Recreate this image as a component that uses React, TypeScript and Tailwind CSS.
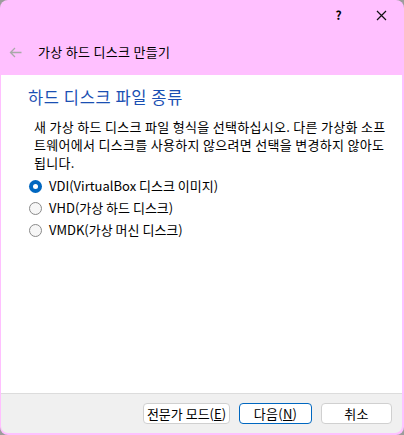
import React, { useState } from "react";

const font = { fontFamily: '"Noto Sans CJK KR", "Noto Sans", sans-serif' };

const formats = [
  { id: "vdi", label: "VDI(VirtualBox 디스크 이미지)" },
  { id: "vhd", label: "VHD(가상 하드 디스크)" },
  { id: "vmdk", label: "VMDK(가상 머신 디스크)" },
];

const Radio = ({ checked }: { checked: boolean }) =>
  checked ? (
    <span className="flex h-[13px] w-[13px] shrink-0 items-center justify-center rounded-full bg-[#0067c0]">
      <span className="h-[5px] w-[5px] rounded-full bg-white" />
    </span>
  ) : (
    <span className="h-[13px] w-[13px] shrink-0 rounded-full border border-[#8a8a8a] bg-[#f6f6f6]" />
  );

const App = () => {
  const [format, setFormat] = useState("vdi");

  return (
    <div className="h-[435px] w-[404px] bg-[#9c9c9c]" style={font}>
      <div className="flex h-full flex-col overflow-hidden rounded-[8px] bg-[#ffc0ff] text-[13px] tracking-[0.3px] text-black">
        {/* Title bar */}
        <div className="flex h-[30px] items-center justify-end pr-[17px]">
          <span className="mr-[34px] text-[12px] font-bold">?</span>
          <svg width="11" height="11" viewBox="0 0 11 11">
            <path d="M1 1L10 10M10 1L1 10" stroke="#111" strokeWidth="1.2" />
          </svg>
        </div>

        {/* Wizard header */}
        <div className="flex h-[45px] items-center pb-[1px] pl-[9px]">
          <svg width="13" height="11" viewBox="0 0 13 11" className="mr-[16px]">
            <path d="M6 1L1.5 5.5L6 10M1.5 5.5H12.5" stroke="#a9a9a9" strokeWidth="1.3" fill="none" />
          </svg>
          <span>가상 하드 디스크 만들기</span>
        </div>

        {/* Page body */}
        <div className="ml-px mr-[2px] flex-1 bg-white pl-[27px] pr-[16px] pt-[10px]">
          <h1 className="text-[16.5px] leading-[24px] tracking-[0.6px] text-[#1a4fb3]">하드 디스크 파일 종류</h1>
          <p className="mt-[9px] pl-[6px] leading-[18px]">
            새 가상 하드 디스크 파일 형식을 선택하십시오. 다른 가상화 소프트웨어에서 디스크를 사용하지 않으려면 선택을 변경하지 않아도 됩니다.
          </p>
          <div className="mt-[5px] flex flex-col gap-[4px] pl-[1px] tracking-normal">
            {formats.map((f) => (
              <label
                key={f.id}
                className="flex h-[18px] cursor-default items-center gap-[7px]"
                onClick={() => setFormat(f.id)}
              >
                <Radio checked={format === f.id} />
                <span>{f.label}</span>
              </label>
            ))}
          </div>
        </div>

        {/* Buttons */}
        <div className="mb-[2px] ml-px mr-[2px] flex h-[40px] items-center justify-end gap-[9px] rounded-b-[7px] border-t border-[#dcdcdc] bg-[#f0f0f0] pb-[1px] pr-[10px]">
          <button className="h-[21px] w-[87px] rounded-[4px] border border-[#d0d0d0] bg-white text-[13px] tracking-normal">
            전문가 모드(<span className="underline">E</span>)
          </button>
          <button className="h-[21px] w-[73px] rounded-[4px] border border-[#0067c0] bg-white text-[13px]">
            다음(<span className="underline">N</span>)
          </button>
          <button className="h-[21px] w-[71px] rounded-[4px] border border-[#d0d0d0] bg-white text-[13px]">
            취소
          </button>
        </div>
      </div>
    </div>
  );
};

export default App;
